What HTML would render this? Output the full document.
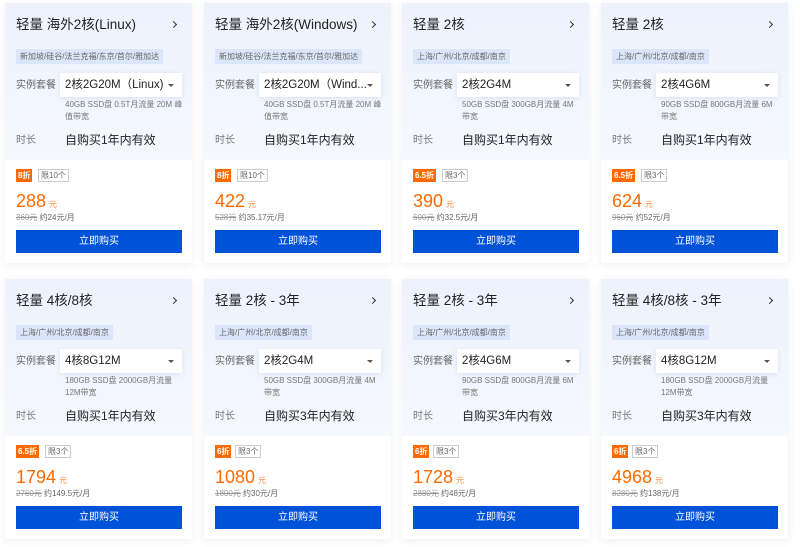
<!DOCTYPE html>
<html><head><meta charset="utf-8"><style>
*{margin:0;padding:0;box-sizing:border-box}
body{width:800px;height:547px;background:#fff;position:relative;overflow:hidden;font-family:"Liberation Sans","Noto Sans CJK SC",sans-serif}
.c{position:absolute;width:187px;height:260px;background:#fff;box-shadow:0 2px 8px rgba(40,60,120,.08)}
.h{position:absolute;left:0;top:0;width:187px;height:157px;background:linear-gradient(180deg,#edf2fd,#f5f8fe)}
.t{position:absolute;left:11px;top:13px;font-size:13.5px;line-height:18px;color:#222;white-space:nowrap}
.ar{position:absolute;right:16px;top:19px;width:5px;height:5px;border-right:1.5px solid #333;border-top:1.5px solid #333;transform:rotate(45deg)}
.tag{position:absolute;left:11px;top:46px;height:15px;line-height:15px;padding:0 4px;font-size:8px;color:#666;background:#dce6fb}
.lb{position:absolute;left:11px;top:76px;font-size:10px;line-height:14px;color:#666}
.sel{position:absolute;left:55px;top:70px;width:122px;height:24px;background:#fff;box-shadow:0 1px 5px rgba(0,40,120,.1);font-size:11.5px;line-height:24px;padding-left:5px;color:#222;white-space:nowrap}
.sel:after{content:"";position:absolute;right:8px;top:11px;border:3px solid transparent;border-top-color:#555}
.d{position:absolute;left:60px;top:96px;width:120px;font-size:8px;line-height:12px;color:#777}
.dl{position:absolute;left:11px;top:131px;font-size:10px;line-height:14px;color:#777}
.dv{position:absolute;left:60px;top:129px;font-size:12px;line-height:17px;color:#222}
.b{position:absolute;left:11px;top:166px;height:13px;line-height:13px;padding:0 2px;font-size:8px;color:#fff;background:#ff6a00;font-weight:bold}
.lm{position:absolute;top:166px;height:13px;line-height:11px;padding:0 2px;font-size:8px;color:#666;border:1px solid #ccc}
.p{position:absolute;left:11px;top:187px;font-size:18px;line-height:22px;color:#ff6a00;white-space:nowrap}
.p small{font-size:8px;color:#ff8a40;margin-left:3px}
.s{position:absolute;left:11px;top:209px;font-size:8px;line-height:12px;color:#666;white-space:nowrap}
.s s{color:#999}
.btn{position:absolute;left:11px;top:227px;width:166px;height:23px;background:#0052d9;color:#fff;font-size:10px;line-height:23px;text-align:center}
</style></head><body>

<div class="c" style="left:5px;top:3px"><div class="h"></div><div class="t">轻量 海外2核(Linux)</div><div class="ar"></div><div class="tag">新加坡/硅谷/法兰克福/东京/首尔/雅加达</div><div class="lb">实例套餐</div><div class="sel">2核2G20M（Linux)</div><div class="d">40GB SSD盘 0.5T月流量 20M 峰值带宽</div><div class="dl">时长</div><div class="dv">自购买1年内有效</div><div class="b">8折</div><div class="lm" style="left:33px">限10个</div><div class="p">288<small>元</small></div><div class="s"><s>360元</s> 约24元/月</div><div class="btn">立即购买</div></div>

<div class="c" style="left:204px;top:3px"><div class="h"></div><div class="t">轻量 海外2核(Windows)</div><div class="ar"></div><div class="tag">新加坡/硅谷/法兰克福/东京/首尔/雅加达</div><div class="lb">实例套餐</div><div class="sel">2核2G20M（Wind...</div><div class="d">40GB SSD盘 0.5T月流量 20M 峰值带宽</div><div class="dl">时长</div><div class="dv">自购买1年内有效</div><div class="b">8折</div><div class="lm" style="left:33px">限10个</div><div class="p">422<small>元</small></div><div class="s"><s>528元</s> 约35.17元/月</div><div class="btn">立即购买</div></div>

<div class="c" style="left:402px;top:3px"><div class="h"></div><div class="t">轻量 2核</div><div class="ar"></div><div class="tag">上海/广州/北京/成都/南京</div><div class="lb">实例套餐</div><div class="sel">2核2G4M</div><div class="d">50GB SSD盘 300GB月流量 4M 带宽</div><div class="dl">时长</div><div class="dv">自购买1年内有效</div><div class="b">6.5折</div><div class="lm" style="left:40px">限3个</div><div class="p">390<small>元</small></div><div class="s"><s>600元</s> 约32.5元/月</div><div class="btn">立即购买</div></div>

<div class="c" style="left:601px;top:3px"><div class="h"></div><div class="t">轻量 2核</div><div class="ar"></div><div class="tag">上海/广州/北京/成都/南京</div><div class="lb">实例套餐</div><div class="sel">2核4G6M</div><div class="d">90GB SSD盘 800GB月流量 6M 带宽</div><div class="dl">时长</div><div class="dv">自购买1年内有效</div><div class="b">6.5折</div><div class="lm" style="left:40px">限3个</div><div class="p">624<small>元</small></div><div class="s"><s>960元</s> 约52元/月</div><div class="btn">立即购买</div></div>

<div class="c" style="left:5px;top:279px"><div class="h"></div><div class="t">轻量 4核/8核</div><div class="ar"></div><div class="tag">上海/广州/北京/成都/南京</div><div class="lb">实例套餐</div><div class="sel">4核8G12M</div><div class="d">180GB SSD盘 2000GB月流量 12M带宽</div><div class="dl">时长</div><div class="dv">自购买1年内有效</div><div class="b">6.5折</div><div class="lm" style="left:40px">限3个</div><div class="p">1794<small>元</small></div><div class="s"><s>2760元</s> 约149.5元/月</div><div class="btn">立即购买</div></div>

<div class="c" style="left:204px;top:279px"><div class="h"></div><div class="t">轻量 2核 - 3年</div><div class="ar"></div><div class="tag">上海/广州/北京/成都/南京</div><div class="lb">实例套餐</div><div class="sel">2核2G4M</div><div class="d">50GB SSD盘 300GB月流量 4M 带宽</div><div class="dl">时长</div><div class="dv">自购买3年内有效</div><div class="b">6折</div><div class="lm" style="left:31px">限3个</div><div class="p">1080<small>元</small></div><div class="s"><s>1800元</s> 约30元/月</div><div class="btn">立即购买</div></div>

<div class="c" style="left:402px;top:279px"><div class="h"></div><div class="t">轻量 2核 - 3年</div><div class="ar"></div><div class="tag">上海/广州/北京/成都/南京</div><div class="lb">实例套餐</div><div class="sel">2核4G6M</div><div class="d">90GB SSD盘 800GB月流量 6M 带宽</div><div class="dl">时长</div><div class="dv">自购买3年内有效</div><div class="b">6折</div><div class="lm" style="left:31px">限3个</div><div class="p">1728<small>元</small></div><div class="s"><s>2880元</s> 约48元/月</div><div class="btn">立即购买</div></div>

<div class="c" style="left:601px;top:279px"><div class="h"></div><div class="t">轻量 4核/8核 - 3年</div><div class="ar"></div><div class="tag">上海/广州/北京/成都/南京</div><div class="lb">实例套餐</div><div class="sel">4核8G12M</div><div class="d">180GB SSD盘 2000GB月流量 12M带宽</div><div class="dl">时长</div><div class="dv">自购买3年内有效</div><div class="b">6折</div><div class="lm" style="left:31px">限3个</div><div class="p">4968<small>元</small></div><div class="s"><s>8280元</s> 约138元/月</div><div class="btn">立即购买</div></div>

</body></html>
